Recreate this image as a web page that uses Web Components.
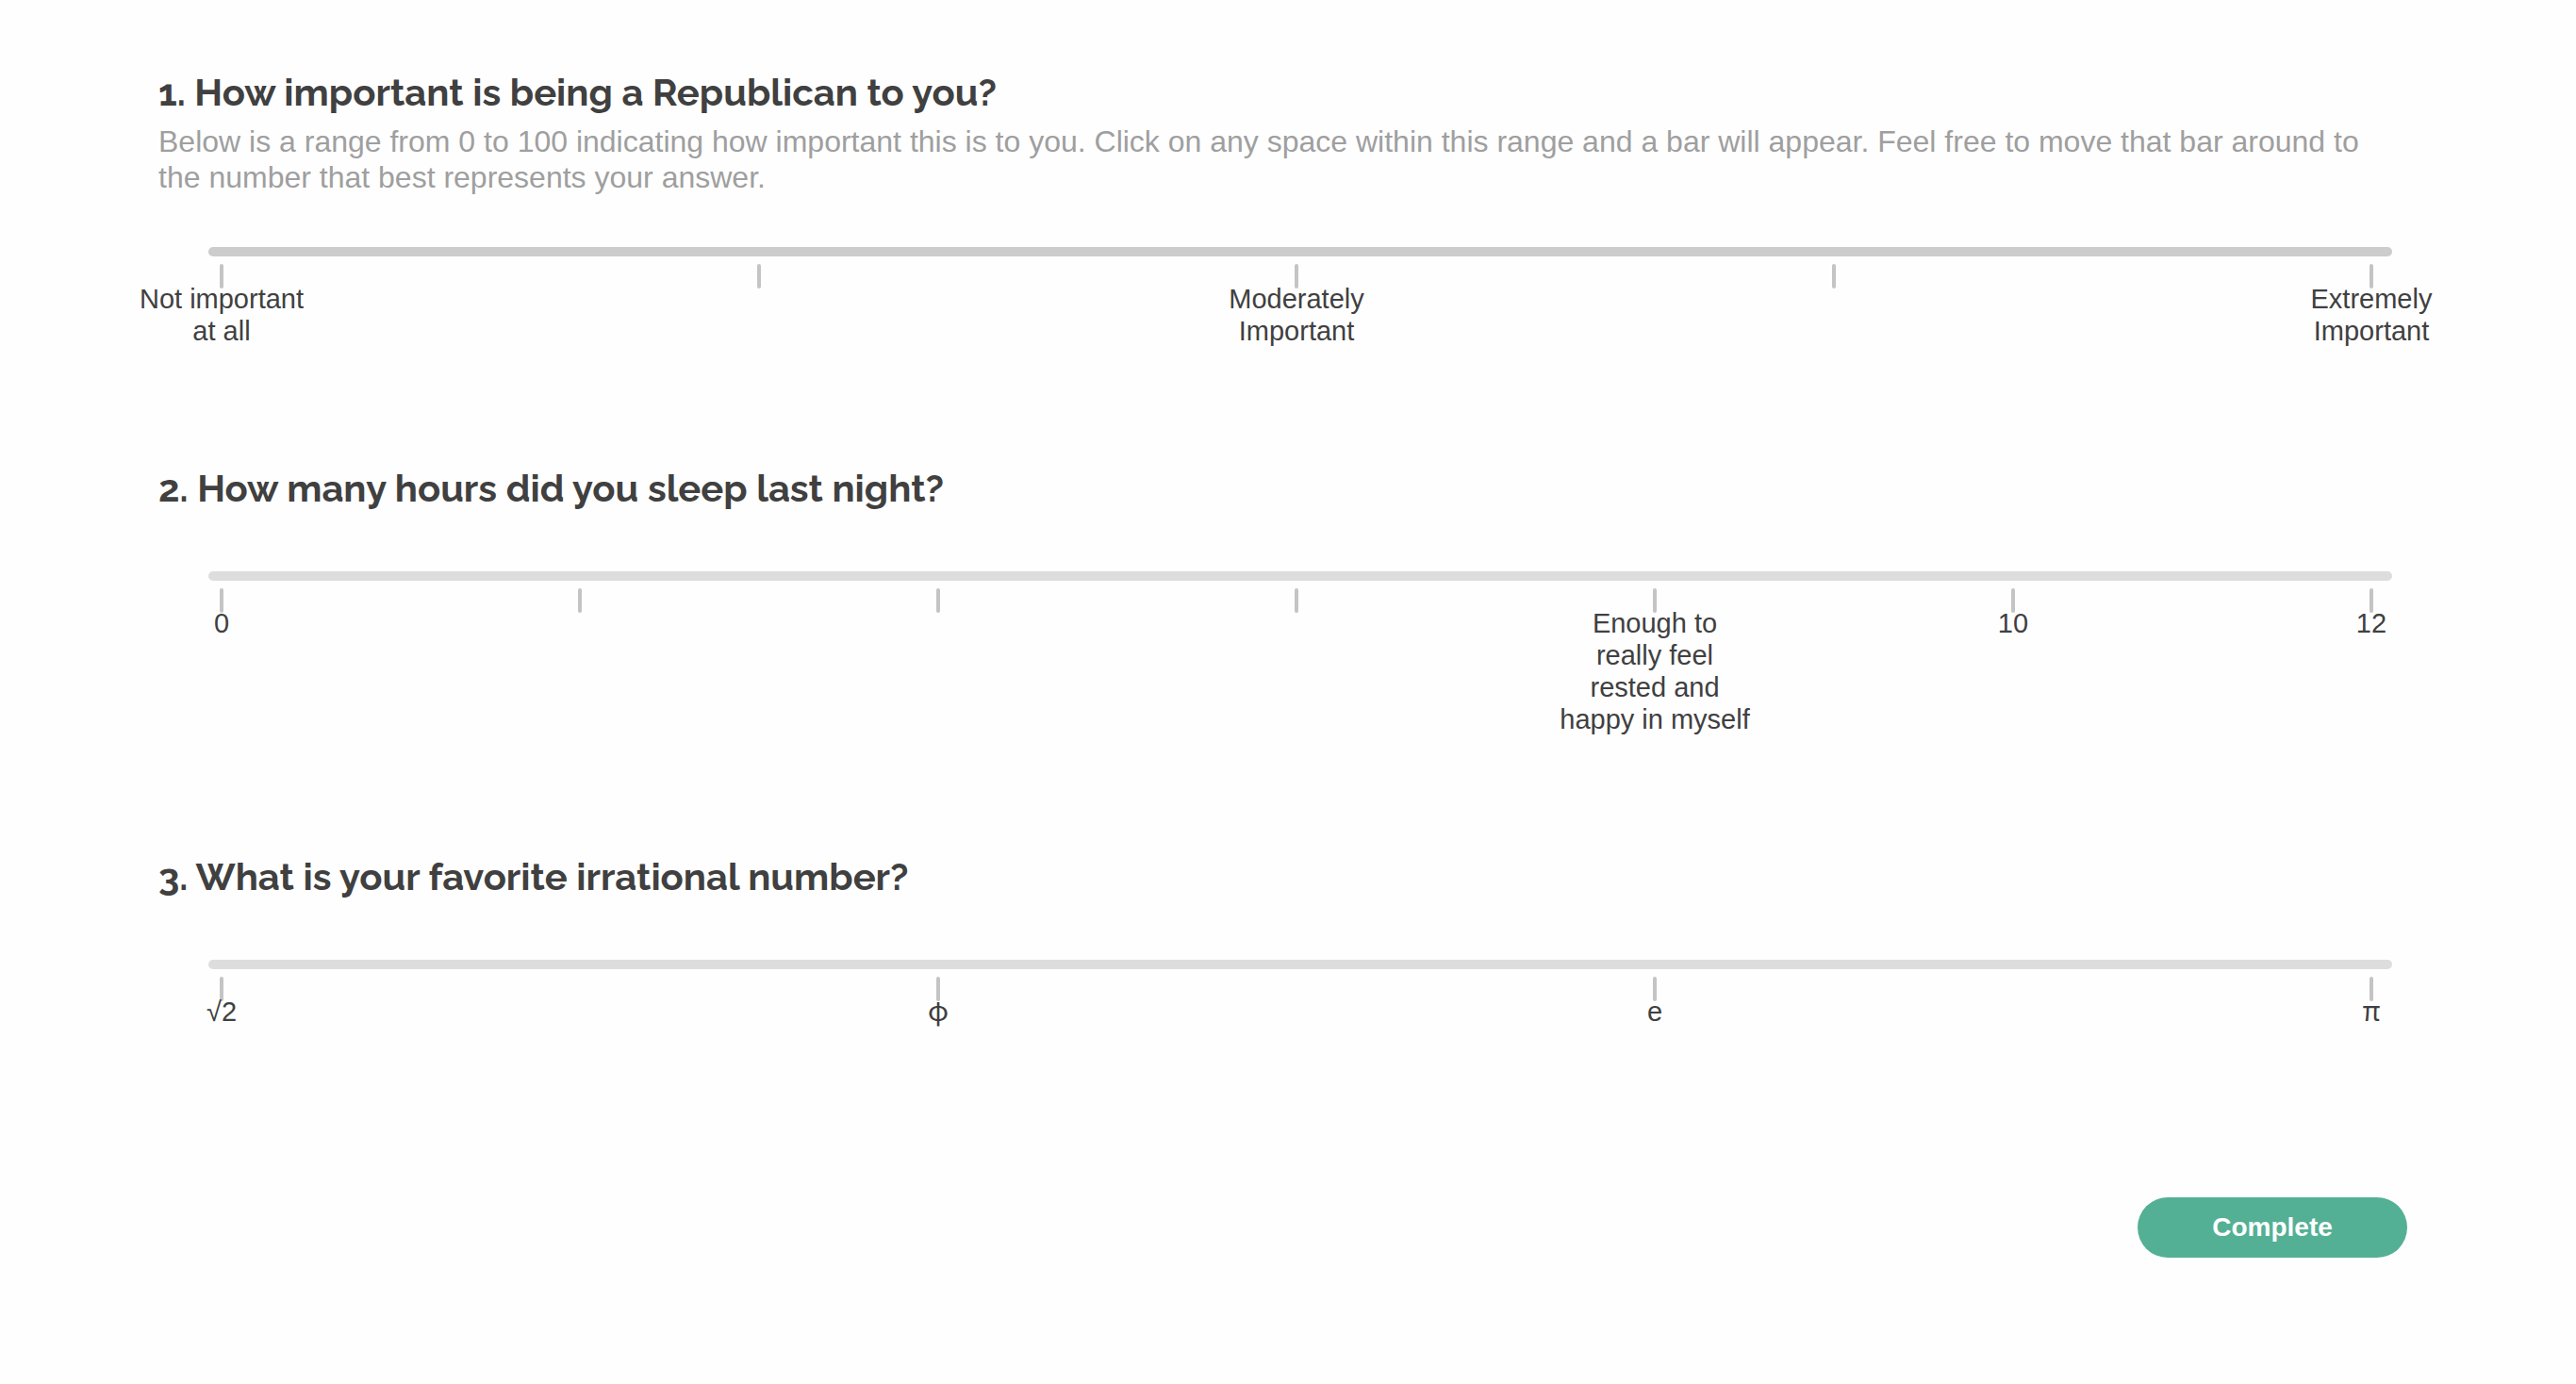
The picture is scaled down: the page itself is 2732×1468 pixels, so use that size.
<!DOCTYPE html>
<html lang="en">
<head>
<meta charset="utf-8">
<meta name="viewport" content="width=device-width, initial-scale=1">
<title>Survey</title>
<style>
  body {
    margin: 0;
    background: #fefefe;
    color: #404040;
    font-family: "Helvetica Neue", "Liberation Sans", Arial, sans-serif;
  }
  .greek {
    font-family: "Noto Sans CJK JP", sans-serif;
    line-height: 1;
  }
</style>
</head>
<body>
<survey-page>
  <survey-question number="1" heading="How important is being a Republican to you?" active>
    <span slot="description">Below is a range from 0 to 100 indicating how important this is to you. Click on any space within this range and a bar will appear. Feel free to move that bar around to the number that best represents your answer.</span>
    <scale-tick>Not important at all</scale-tick>
    <scale-tick></scale-tick>
    <scale-tick>Moderately Important</scale-tick>
    <scale-tick></scale-tick>
    <scale-tick>Extremely Important</scale-tick>
  </survey-question>
  <survey-question number="2" heading="How many hours did you sleep last night?" max="12">
    <scale-tick>0</scale-tick>
    <scale-tick></scale-tick>
    <scale-tick></scale-tick>
    <scale-tick></scale-tick>
    <scale-tick>Enough to really feel rested and happy in myself</scale-tick>
    <scale-tick>10</scale-tick>
    <scale-tick>12</scale-tick>
  </survey-question>
  <survey-question number="3" heading="What is your favorite irrational number?" max="3">
    <scale-tick>√2</scale-tick>
    <scale-tick><span class="greek">φ</span></scale-tick>
    <scale-tick>e</scale-tick>
    <scale-tick><span class="greek">π</span></scale-tick>
  </survey-question>
  <survey-button slot="actions">Complete</survey-button>
</survey-page>

<template id="page-template">
  <style>
    :host { display: block; padding: 72px 179px 134px 168px; }
    form { display: flex; flex-direction: column; gap: 124px; }
    footer { display: flex; justify-content: flex-end; margin-top: 56px; }
  </style>
  <form>
    <slot></slot>
    <footer><slot name="actions"></slot></footer>
  </form>
</template>

<template id="question-template">
  <style>
    :host { display: block; }
    h2 {
      margin: 0;
      font: 700 40px/52px Raleway, Lato, sans-serif;
    }
    .description {
      min-height: 62px;
      color: #9f9f9f;
      font-size: 32px;
      line-height: 38px;
    }
    :host([active]) .description { padding: 7px 0 55px; }
    .scale { margin: 0 16px 0 53px; }
    input {
      display: block;
      appearance: none;
      width: 100%;
      height: 10px;
      margin: 0;
      border-radius: 5px;
      background: #dddddd;
      cursor: pointer;
    }
    :host([active]) input { background: #cccccc; }
    input::-webkit-slider-thumb { appearance: none; width: 22px; height: 10px; background: transparent; }
    .ticks {
      display: flex;
      justify-content: space-between;
      padding: 8px 22px 0 14px;
    }
  </style>
  <h2><label for="range"></label></h2>
  <div class="description" id="description"><slot name="description"></slot></div>
  <div class="scale">
    <input id="range" type="range" min="0" aria-describedby="description">
    <div class="ticks"><slot></slot></div>
  </div>
</template>

<template id="tick-template">
  <style>
    :host {
      display: flex;
      flex-direction: column;
      align-items: center;
      width: 0;
    }
    .mark {
      flex: none;
      width: 4px;
      height: 26px;
      margin-bottom: -6px;
      border-radius: 2px;
      background: #c4c4c4;
    }
    .text {
      width: 204px;
      min-height: 34px;
      font-size: 29px;
      line-height: 34px;
      text-align: center;
    }
  </style>
  <span class="mark"></span>
  <span class="text"><slot></slot></span>
</template>

<template id="button-template">
  <style>
    :host { display: block; }
    button {
      min-width: 286px;
      height: 64px;
      padding: 0 64px;
      border: 0;
      border-radius: 32px;
      background: #54b095;
      color: #ffffff;
      font: bold 28px/34px "Helvetica Neue", "Liberation Sans", Arial, sans-serif;
      cursor: pointer;
    }
  </style>
  <button type="button"><slot></slot></button>
</template>

<script>
  class TemplateElement extends HTMLElement {
    constructor() {
      super();
      const template = document.getElementById(this.constructor.template);
      this.attachShadow({ mode: "open" }).append(template.content.cloneNode(true));
    }
  }

  class SurveyPage extends TemplateElement {
    static template = "page-template";
  }

  class SurveyQuestion extends TemplateElement {
    static template = "question-template";
    connectedCallback() {
      this.shadowRoot.querySelector("label").textContent =
        this.getAttribute("number") + ". " + this.getAttribute("heading");
      this.shadowRoot.querySelector("input").max = this.getAttribute("max") || "100";
    }
  }

  class ScaleTick extends TemplateElement {
    static template = "tick-template";
  }

  class SurveyButton extends TemplateElement {
    static template = "button-template";
  }

  customElements.define("survey-page", SurveyPage);
  customElements.define("survey-question", SurveyQuestion);
  customElements.define("scale-tick", ScaleTick);
  customElements.define("survey-button", SurveyButton);
</script>
</body>
</html>
